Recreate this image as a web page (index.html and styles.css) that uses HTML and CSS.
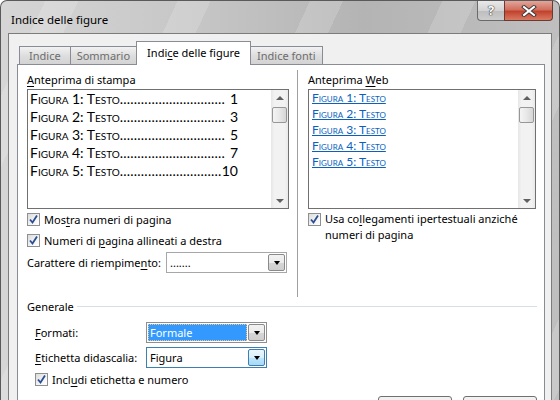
FILE: index.html
```html
<!DOCTYPE html>
<html lang="it">
<head>
    <meta charset="UTF-8">
    <title>Indice delle figure</title>
    <link rel="stylesheet" href="styles.css">
</head>
<body>
    <div class="window">
        <div class="titlebar">
            <span class="title">Indice delle figure</span>
            <div class="caption-buttons">
                <span class="help-button">?</span>
                <span class="close-button">
                    <svg width="16" height="12" viewBox="0 0 16 12">
                        <path d="M3 2 L13 10 M13 2 L3 10" stroke="#3b3b3b" stroke-width="4" stroke-linecap="square"/>
                        <path d="M3 2 L13 10 M13 2 L3 10" stroke="#fff" stroke-width="2" stroke-linecap="square"/>
                    </svg>
                </span>
            </div>
        </div>

        <div class="client">
            <div class="tabs">
                <span class="tab">Indice</span>
                <span class="tab">Sommario</span>
                <span class="tab active">Indi<u>c</u>e delle figure</span>
                <span class="tab">Indice fonti</span>
            </div>

            <div class="tab-page">
                <div class="columns">
                    <div class="column print-column">
                        <div class="group-label"><u>A</u>nteprima di stampa</div>
                        <div class="preview">
                            <div class="preview-list">
                                <div class="toc-row"><span>Figura 1: Testo</span><span class="leader">..............................</span><span class="page">1</span></div>
                                <div class="toc-row"><span>Figura 2: Testo</span><span class="leader">..............................</span><span class="page">3</span></div>
                                <div class="toc-row"><span>Figura 3: Testo</span><span class="leader">..............................</span><span class="page">5</span></div>
                                <div class="toc-row"><span>Figura 4: Testo</span><span class="leader">..............................</span><span class="page">7</span></div>
                                <div class="toc-row"><span>Figura 5: Testo</span><span class="leader">.............................</span><span class="page wide">10</span></div>
                            </div>
                            <div class="scrollbar">
                                <span class="arrow-up"></span>
                                <span class="thumb"></span>
                                <span class="arrow-down"></span>
                            </div>
                        </div>

                        <div class="check">
                            <span class="checkbox"><svg width="11" height="11" viewBox="0 0 11 11"><path d="M2 5.5 L4.5 8.5 L9 1.5" fill="none" stroke="#2b4d94" stroke-width="1.8"/></svg></span>
                            <span>Mos<u>t</u>ra numeri di pagina</span>
                        </div>
                        <div class="check">
                            <span class="checkbox"><svg width="11" height="11" viewBox="0 0 11 11"><path d="M2 5.5 L4.5 8.5 L9 1.5" fill="none" stroke="#2b4d94" stroke-width="1.8"/></svg></span>
                            <span>Numeri di <u>p</u>agina allineati a destra</span>
                        </div>

                        <div class="fill-row">
                            <span class="fill-label">Carattere di riempime<u>n</u>to:</span>
                            <div class="combo">
                                <span class="combo-text">.......</span>
                                <span class="combo-button"><span class="caret"></span></span>
                            </div>
                        </div>
                    </div>

                    <div class="separator"></div>

                    <div class="column web-column">
                        <div class="group-label">Anteprima <u>W</u>eb</div>
                        <div class="preview">
                            <div class="web-list">
                                <a href="#">Figura 1: Testo</a>
                                <a href="#">Figura 2: Testo</a>
                                <a href="#">Figura 3: Testo</a>
                                <a href="#">Figura 4: Testo</a>
                                <a href="#">Figura 5: Testo</a>
                            </div>
                            <div class="scrollbar">
                                <span class="arrow-up"></span>
                                <span class="thumb"></span>
                                <span class="arrow-down"></span>
                            </div>
                        </div>

                        <div class="check multiline">
                            <span class="checkbox"><svg width="11" height="11" viewBox="0 0 11 11"><path d="M2 5.5 L4.5 8.5 L9 1.5" fill="none" stroke="#2b4d94" stroke-width="1.8"/></svg></span>
                            <span>Usa co<u>l</u>legamenti ipertestuali anziché<br>numeri di pagina</span>
                        </div>
                    </div>
                </div>

                <div class="generale">
                    <div class="group-title"><span>Generale</span></div>
                    <div class="form-row">
                        <span class="form-label"><u>F</u>ormati:</span>
                        <div class="combo focused">
                            <span class="combo-text">Formale</span>
                            <span class="combo-button"><span class="caret"></span></span>
                        </div>
                    </div>
                    <div class="form-row">
                        <span class="form-label"><u>E</u>tichetta didascalia:</span>
                        <div class="combo hover">
                            <span class="combo-text">Figura</span>
                            <span class="combo-button"><span class="caret"></span></span>
                        </div>
                    </div>
                    <div class="check indented">
                        <span class="checkbox"><svg width="11" height="11" viewBox="0 0 11 11"><path d="M2 5.5 L4.5 8.5 L9 1.5" fill="none" stroke="#2b4d94" stroke-width="1.8"/></svg></span>
                        <span>Incl<u>u</u>di etichetta e numero</span>
                    </div>
                </div>

                <div class="buttons">
                    <span class="button"></span>
                    <span class="button"></span>
                </div>
            </div>
        </div>
    </div>
</body>
</html>
```

FILE: styles.css
```css
body {
    margin: 0;
    background-color: #fff;
    font-family: "Noto Sans", "Open Sans", sans-serif;
    font-size: 11px;
    color: #000;
}

u {
    text-decoration-thickness: 1px;
    text-underline-offset: 2px;
}

/* finestra con cornice Aero grigia */
.window {
    width: 560px;
    height: 400px;
    box-sizing: border-box;
    border: 1px solid #5a5a5a;
    border-bottom: none;
    border-radius: 7px 7px 0 0;
    padding: 0 7px;
    display: flex;
    flex-direction: column;
    overflow: hidden;
    background:
        repeating-linear-gradient(115deg, rgba(255, 255, 255, 0) 0 40px, rgba(255, 255, 255, 0.16) 40px 70px, rgba(255, 255, 255, 0) 70px 120px),
        linear-gradient(to right, #d6d6d6, #c6c6c6 35%, #b4b4b4 65%, #bfbfbf);
}

.titlebar {
    height: 32px;
    display: flex;
    justify-content: space-between;
    flex-shrink: 0;
}

.title {
    padding: 11px 0 0 3px;
    font-size: 11.5px;
    line-height: 16px;
}

.caption-buttons {
    display: flex;
    margin-right: -1px;
    height: 20px;
}

.help-button {
    width: 26px;
    height: 19px;
    border: 1px solid #6a6a6a;
    border-top: none;
    border-right: none;
    border-radius: 0 0 0 4px;
    background: linear-gradient(#e9e9e9, #d3d3d3 50%, #bdbdbd 51%, #cdcdcd);
    color: #fff;
    font-weight: bold;
    font-size: 13px;
    line-height: 18px;
    text-align: center;
    text-shadow: 0 0 1px #333, 0 0 1px #333, 0 0 1px #333;
}

.close-button {
    width: 47px;
    height: 19px;
    border: 1px solid #6a3a33;
    border-top: none;
    border-radius: 0 0 4px 0;
    background: linear-gradient(#e3a69b, #d0705f 45%, #c2432d 55%, #d97a62);
    display: flex;
    align-items: center;
    justify-content: center;
}

/* area client */
.client {
    flex: 1;
    border: 1px solid #7c7c7c;
    border-bottom: none;
    background-color: #f0f0f0;
    padding: 8px 6px 0 8px;
    display: flex;
    flex-direction: column;
    min-height: 0;
}

.tabs {
    display: flex;
    align-items: flex-end;
    height: 22px;
    padding-left: 2px;
    position: relative;
    z-index: 1;
}

.tab {
    height: 17px;
    line-height: 17px;
    padding: 0 6px;
    border: 1px solid #898c95;
    border-bottom: none;
    margin-right: -1px;
    background: linear-gradient(#f2f2f2, #dedede 50%, #d3d3d3);
    color: #6d6d6d;
    white-space: nowrap;
}

.tab:first-child {
    padding: 0 9px;
}

.tab.active {
    height: 23px;
    line-height: 22px;
    margin-bottom: -1px;
    background: #fff;
    color: #000;
    padding: 0 10px;
}

.tab-page {
    flex: 1;
    background-color: #fff;
    border: 1px solid #898c95;
    border-bottom: none;
}

.columns {
    display: flex;
    height: 227px;
    margin: 5px 0 0 9px;
}

.column {
    padding-top: 2px;
    white-space: nowrap;
}

.print-column {
    width: 262px;
}

.web-column {
    width: 228px;
}

.separator {
    width: 1px;
    background-color: #a0a0a0;
    margin: 0 10px 0 8px;
}

.group-label {
    line-height: 15px;
    margin-bottom: 2px;
}

.preview {
    height: 120px;
    box-sizing: border-box;
    border: 1px solid #707070;
    display: flex;
}

.preview-list {
    flex: 1;
    padding: 0 33px 0 2px;
    min-width: 0;
}

.toc-row {
    display: flex;
    height: 18px;
    line-height: 18px;
    font-family: "Lato", "Noto Sans", sans-serif;
    font-size: 14px;
    font-variant: small-caps;
    white-space: nowrap;
}

.leader {
    flex: 1;
    min-width: 0;
    overflow: hidden;
    font-variant: normal;
    letter-spacing: 0.2px;
}

.page {
    padding-left: 4px;
}

.page.wide {
    padding-left: 0;
}

.web-list {
    flex: 1;
    padding: 0 0 0 3px;
    display: flex;
    flex-direction: column;
}

.web-list a {
    height: 16px;
    line-height: 16px;
    color: #0a5fc0;
    font-family: "Lato", "Noto Sans", sans-serif;
    font-size: 12px;
    font-variant: small-caps;
    align-self: flex-start;
}

.scrollbar {
    width: 17px;
    background: linear-gradient(to right, #e6e6e6, #f2f2f2 20%, #f2f2f2 80%, #e9e9e9);
    display: flex;
    flex-direction: column;
    align-items: center;
}

.arrow-up,
.arrow-down {
    width: 0;
    height: 0;
    border-left: 4px solid transparent;
    border-right: 4px solid transparent;
}

.arrow-up {
    border-bottom: 4px solid #606060;
    margin-top: 6px;
}

.arrow-down {
    border-top: 4px solid #606060;
    margin-top: auto;
    margin-bottom: 5px;
}

.thumb {
    width: 13px;
    height: 14px;
    margin-top: 7px;
    border: 1px solid #979797;
    border-radius: 2px;
    background: linear-gradient(to right, #f4f4f4, #e8e8e8 50%, #d6d6d6);
}

/* caselle di controllo */
.check {
    display: flex;
    align-items: center;
    height: 21px;
    white-space: nowrap;
}

.check.multiline {
    align-items: flex-start;
    height: auto;
    padding-top: 2px;
    line-height: 16px;
}

.check.multiline .checkbox {
    margin-top: 2px;
}

.checkbox {
    width: 11px;
    height: 11px;
    flex-shrink: 0;
    border: 1px solid #8e8f8f;
    background: linear-gradient(135deg, #dcdcdc, #f4f4f4 60%, #fff);
    margin-right: 4px;
    display: flex;
}

.fill-row {
    display: flex;
    align-items: center;
    margin-top: 1px;
}

.fill-label {
    width: 139px;
}

/* caselle combinate */
.combo {
    width: 121px;
    height: 21px;
    box-sizing: border-box;
    border: 1px solid #a7a7a7;
    background-color: #fff;
    display: flex;
    padding: 1px;
}

.combo-text {
    flex: 1;
    padding-left: 2px;
    line-height: 17px;
}

.combo-button {
    width: 15px;
    border: 1px solid #8a8a8a;
    border-radius: 2px;
    background: linear-gradient(#f2f2f2, #ebebeb 50%, #d6d6d6 51%, #cfcfcf);
    display: flex;
    align-items: center;
    justify-content: center;
}

.caret {
    width: 0;
    height: 0;
    border-left: 3.5px solid transparent;
    border-right: 3.5px solid transparent;
    border-top: 4px solid #000;
}

.combo.focused {
    border-color: #8f8f8f;
}

.combo.focused .combo-text {
    background-color: #3399ff;
    color: #fff;
    outline: 1px dotted #f6c37a;
    outline-offset: -1px;
    margin-right: 1px;
}

.combo.hover {
    border-color: #3c7fb1;
}

.combo.hover .combo-button {
    border-color: #3c7fb1;
    background: linear-gradient(#eaf6fd, #d9f0fc 50%, #bee6fd 51%, #a7d9f5);
}

/* sezione Generale */
.group-title {
    display: flex;
    align-items: center;
    margin: 2px 7px 0 9px;
    line-height: 15px;
}

.group-title::after {
    content: "";
    flex: 1;
    border-top: 1px solid #d5dfe5;
    margin-left: 3px;
}

.form-row {
    display: flex;
    align-items: center;
    margin: 4px 0 0 17px;
    white-space: nowrap;
}

.group-title + .form-row {
    margin-top: 8px;
}

.form-label {
    width: 111px;
}

.check.indented {
    margin: 2px 0 0 17px;
    height: 19px;
}

.buttons {
    display: flex;
    justify-content: flex-end;
    gap: 11px;
    margin: 7px 7px 0 0;
}

.button {
    width: 72px;
    height: 22px;
    border: 1px solid #707070;
    border-radius: 3px;
    background: linear-gradient(#f2f2f2, #ebebeb 50%, #dddddd 51%, #cfcfcf);
}
```
